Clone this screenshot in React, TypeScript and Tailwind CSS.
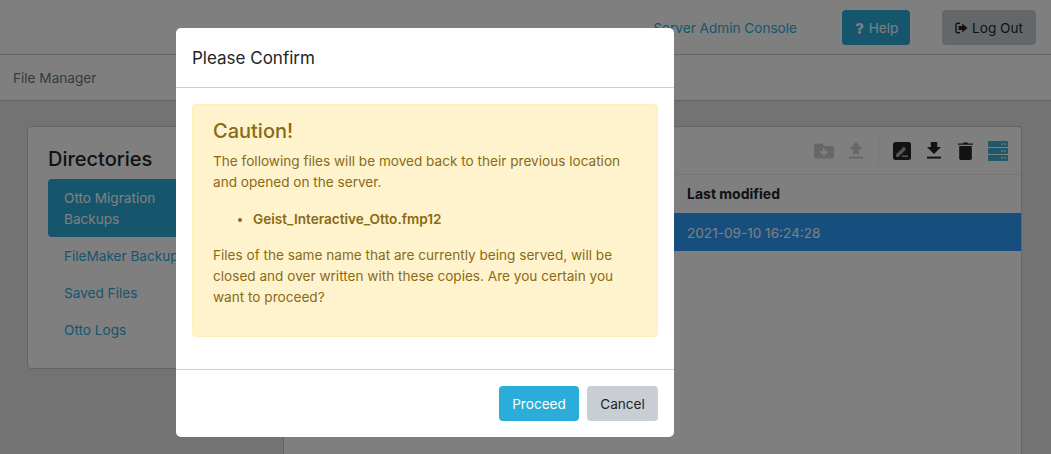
import React from "react";
import { FaQuestion, FaFolderPlus } from "react-icons/fa";

function LogoutIcon() {
  return (
    <svg width="13" height="12" viewBox="0 0 13 12" className="shrink-0">
      <path d="M5 1.2H2.6A1.6 1.6 0 0 0 1 2.8v6.4a1.6 1.6 0 0 0 1.6 1.6H5" fill="none" stroke="currentColor" strokeWidth="1.4" />
      <path d="M7.2 1.6 12.6 6 7.2 10.4V8H3.6V4h3.6z" fill="currentColor" />
    </svg>
  );
}

function UploadIcon() {
  return (
    <svg width="14" height="17" viewBox="0 0 14 17" fill="currentColor">
      <path d="M7 0 14 7H10.2V12H3.8V7H0z" />
      <rect y="14.6" width="14" height="2" />
    </svg>
  );
}

function DownloadIcon() {
  return (
    <svg width="14" height="17" viewBox="0 0 14 17" fill="currentColor">
      <path d="M3.8 0H10.2V5H14L7 12 0 5H3.8z" />
      <rect y="14.6" width="14" height="2" />
    </svg>
  );
}

function EditIcon() {
  return (
    <svg width="18" height="18" viewBox="0 0 18 18">
      <rect width="18" height="18" rx="2.5" fill="#212529" />
      <path d="M3 12.6 10.8 4.8 13.2 7.2 5.4 15H3z" fill="#a8a8a8" />
      <path d="M9 13.4H15V15H9z" fill="#a8a8a8" />
    </svg>
  );
}

function TrashIcon() {
  return (
    <svg width="15" height="18" viewBox="0 0 15 18">
      <path d="M5.2 .4h4.6v1H15v1.4H0V1.4h5.2z" fill="#212529" />
      <path d="M1.2 4h12.6v12.2a1.8 1.8 0 0 1-1.8 1.8H3a1.8 1.8 0 0 1-1.8-1.8z" fill="#212529" />
    </svg>
  );
}

function ServerIcon() {
  const rows = [0, 7, 14];
  return (
    <svg width="20" height="20" viewBox="0 0 20 20">
      {rows.map((y) => (
        <g key={y}>
          <rect x="0" y={y} width="20" height="6" rx="1" fill="#3fb0d4" />
          <rect x="13" y={y + 2} width="2" height="2" fill="#b5d5e2" />
          <rect x="16" y={y + 2} width="2" height="2" fill="#b5d5e2" />
        </g>
      ))}
    </svg>
  );
}

export default function App() {
  return (
    <div
      className="relative h-[454px] w-[1051px] overflow-hidden bg-[#e7e7e7] text-[13.6px] leading-[21px] text-[#212529]"
      style={{ fontFamily: "Inter, 'Liberation Sans', sans-serif" }}
    >
      <header className="flex h-[55px] items-center justify-end border-b border-[#c8c8c8] bg-white pr-[15px]">
        <a className="mt-[2px] mr-[45px] text-[#2badd9]">Server Admin Console</a>
        <button className="mr-[32px] flex h-[35px] w-[68px] items-center justify-center gap-[4px] rounded bg-[#2badd9] pt-[2px] text-white">
          <FaQuestion size={11} />
          <span>Help</span>
        </button>
        <button className="flex h-[35px] w-[94px] items-center justify-center gap-[4px] rounded bg-[#c9ced4] pt-[2px] text-[#212529]">
          <LogoutIcon />
          <span>Log Out</span>
        </button>
      </header>

      <div className="flex h-[46px] items-center border-b border-[#c8c8c8] bg-white pt-[2px] pl-[13px] text-[#6c757d]">
        File Manager
      </div>

      <main className="flex h-[354px] items-start pt-[25px] pr-[29px] pl-[27px]">
        <aside className="h-[243px] w-[256px] shrink-0 rounded border border-[#c8c8c8] bg-white pt-[20px] pl-[20px]">
          <h2 className="mb-[7px] h-[25px] text-[20px] leading-[24px] font-medium">Directories</h2>
          <nav className="flex w-[170px] flex-col text-[#2badd9]">
            <a className="h-[58px] rounded bg-[#2badd9] px-[16px] pt-[9px] text-white">Otto Migration Backups</a>
            <a className="h-[37px] px-[16px] pt-[9px] whitespace-nowrap">FileMaker Backups</a>
            <a className="h-[37px] px-[16px] pt-[9px]">Saved Files</a>
            <a className="h-[37px] px-[16px] pt-[9px]">Otto Logs</a>
          </nav>
        </aside>

        <section className="flex h-[340px] min-w-0 flex-1 flex-col rounded-tr border-t border-r border-l border-[#c8c8c8] bg-white">
          <div className="flex h-[48px] items-center justify-end border-b border-[#ececec] pr-[13px]">
            <span className="flex text-[#cfcfcf]"><FaFolderPlus size={20} /></span>
            <span className="ml-[15px] flex text-[#cfcfcf]"><UploadIcon /></span>
            <span className="mr-[14px] ml-[15px] h-[31px] border-l border-[#ececec]" />
            <EditIcon />
            <span className="ml-[16px] flex text-[#212529]"><DownloadIcon /></span>
            <span className="ml-[17px] flex"><TrashIcon /></span>
            <span className="ml-[15px] flex"><ServerIcon /></span>
          </div>
          <div className="flex h-[38px] items-center pb-[2px] pl-[403px] text-[14px] font-bold">Last modified</div>
          <div className="flex h-[38px] items-center bg-[#2c9cfa] pt-[2px] pl-[403px] text-white">2021-09-10 16:24:28</div>
        </section>
      </main>

      <div className="absolute inset-0 bg-black/50" />

      <div className="absolute top-[28px] left-[176px] flex h-[409px] w-[498px] flex-col rounded-[5px] bg-white">
        <div className="flex h-[60px] items-center border-b border-[#d0d0d0] px-[16px] pt-[2px] text-[17px] text-[#212529]">
          Please Confirm
        </div>
        <div className="h-[281px] p-[16px]">
          <div className="h-[233px] rounded border border-[#ffeeba] bg-[#fff3cd] px-[20px] pt-[14px] text-[#8a6a14]">
            <h4 className="mb-[8px] text-[20px] leading-[24px] font-medium">Caution!</h4>
            <p className="mb-[16px]">The following files will be moved back to their previous location and opened on the server.</p>
            <ul className="mb-[15px] list-disc pl-[40px] font-semibold">
              <li>Geist_Interactive_Otto.fmp12</li>
            </ul>
            <p>Files of the same name that are currently being served, will be closed and over written with these copies. Are you certain you want to proceed?</p>
          </div>
        </div>
        <div className="flex flex-1 items-start justify-end gap-[8px] border-t border-[#d0d0d0] px-[16px] pt-[16px]">
          <button className="h-[35px] w-[80px] rounded bg-[#2badd9] pt-[2px] text-white">Proceed</button>
          <button className="h-[35px] w-[71px] rounded bg-[#c9ced4] pt-[2px] text-[#212529]">Cancel</button>
        </div>
      </div>
    </div>
  );
}
